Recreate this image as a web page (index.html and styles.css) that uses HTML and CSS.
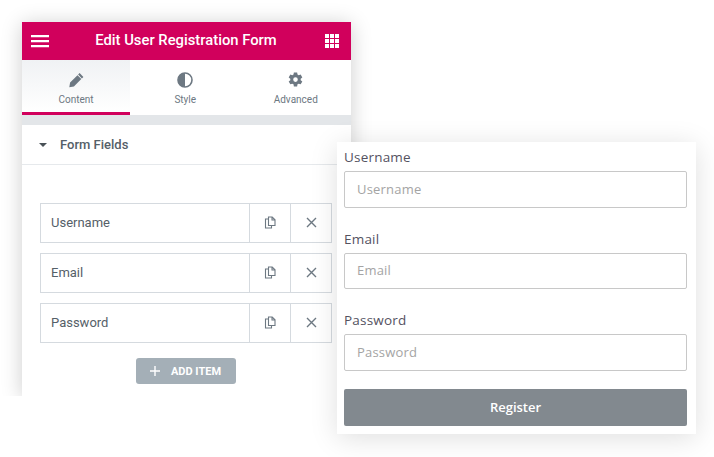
FILE: index.html
```html
<!DOCTYPE html>
<html lang="en">
<head>
  <meta charset="UTF-8">
  <title>Edit User Registration Form</title>
  <link rel="stylesheet" href="styles.css">
</head>
<body>
<div class="panel">
  <div class="panel-head">
    <svg class="head-icon" width="18" height="14" viewBox="0 0 18 14"><path d="M0 1h18v2.2H0zM0 6h18v2.2H0zM0 11h18v2.2H0z" fill="#fff"/></svg>
    <div class="panel-title">Edit User Registration Form</div>
    <svg class="head-icon" width="14" height="14" viewBox="0 0 14 14" fill="#fff"><path d="M0 0h4v4H0zM5 0h4v4H5zM10 0h4v4h-4zM0 5h4v4H0zM5 5h4v4H5zM10 5h4v4h-4zM0 10h4v4H0zM5 10h4v4H5zM10 10h4v4h-4z"/></svg>
  </div>

  <div class="tabs">
    <div class="tab active">
      <svg width="15" height="16" viewBox="0 0 15 15"><path d="M10.6.6l3.800 3.800-1.500 1.500-3.800-3.800zM8.500 2.700l3.800 3.800-7.400 7.400-4.600.8.800-4.600z" fill="#6d7882"/></svg>
      <span>Content</span>
    </div>
    <div class="tab">
      <svg width="16" height="16" viewBox="0 0 16 16"><circle cx="8" cy="8" r="7" fill="none" stroke="#6d7882" stroke-width="1.600"/><path d="M8 1a7 7 0 0 0 0 14z" fill="#6d7882"/></svg>
      <span>Style</span>
    </div>
    <div class="tab">
      <svg width="15" height="16" viewBox="0 0 24 24"><path fill="#6d7882" fill-rule="evenodd" d="M14.600 0l.6 3.300 1.900 1.100 3.200-1.100 2.600 4.500-2.600 2.200v2.200l2.600 2.200-2.600 4.500-3.200-1.100-1.900 1.100-.6 3.300H9.400l-.6-3.300-1.900-1.100-3.200 1.100L1.100 14.400l2.600-2.200V10L1.100 7.800l2.600-4.500 3.200 1.100 1.900-1.100L9.400 0zM12 7.600a3.700 3.700 0 1 0 0 7.400 3.700 3.700 0 0 0 0-7.400z"/></svg>
      <span>Advanced</span>
    </div>
  </div>

  <div class="section-head">
    <span class="caret"></span>
    <span>Form Fields</span>
  </div>

  <div class="rows">
    <div class="row">
      <div class="row-name">Username</div>
      <div class="row-btn"><svg class="copy-icon" width="12" height="13" viewBox="0 0 12 13"><path d="M4.500 1h3.700L11 3.800v5.700H4.500zM8 1v3h3M4.500 3H1.500v9h6V9.500" fill="none" stroke="#6d7882" stroke-width="1.100"/></svg></div>
      <div class="row-btn"><svg class="close-icon" width="11" height="11" viewBox="0 0 11 11"><path d="M1 1l9 9M10 1l-9 9" stroke="#6d7882" stroke-width="1.400"/></svg></div>
    </div>
    <div class="row">
      <div class="row-name">Email</div>
      <div class="row-btn"><svg class="copy-icon" width="12" height="13" viewBox="0 0 12 13"><path d="M4.500 1h3.700L11 3.800v5.700H4.500zM8 1v3h3M4.500 3H1.500v9h6V9.500" fill="none" stroke="#6d7882" stroke-width="1.100"/></svg></div>
      <div class="row-btn"><svg class="close-icon" width="11" height="11" viewBox="0 0 11 11"><path d="M1 1l9 9M10 1l-9 9" stroke="#6d7882" stroke-width="1.400"/></svg></div>
    </div>
    <div class="row">
      <div class="row-name">Password</div>
      <div class="row-btn"><svg class="copy-icon" width="12" height="13" viewBox="0 0 12 13"><path d="M4.500 1h3.700L11 3.800v5.700H4.500zM8 1v3h3M4.500 3H1.500v9h6V9.500" fill="none" stroke="#6d7882" stroke-width="1.100"/></svg></div>
      <div class="row-btn"><svg class="close-icon" width="11" height="11" viewBox="0 0 11 11"><path d="M1 1l9 9M10 1l-9 9" stroke="#6d7882" stroke-width="1.400"/></svg></div>
    </div>
  </div>

  <div class="add-wrap">
    <div class="add-btn">
      <svg width="10" height="10" viewBox="0 0 10 10"><path d="M5 0v10M0 5h10" stroke="#fff" stroke-width="1.400"/></svg>
      <span>ADD ITEM</span>
    </div>
  </div>
</div>

<form class="reg-form">
  <label class="reg-label">Username</label>
  <div class="reg-input">Username</div>
  <label class="reg-label">Email</label>
  <div class="reg-input">Email</div>
  <label class="reg-label">Password</label>
  <div class="reg-input">Password</div>
  <div class="reg-btn">Register</div>
</form>
</body>
</html>
```

FILE: styles.css
```css
body {
  margin: 0;
  background: #fff;
  font-family: Roboto, sans-serif;
  overflow: hidden;
}

.panel {
  width: 329px;
  height: 374px;
  margin: 22px 0 0 22px;
  background: #fff;
  box-shadow: 0 2px 20px rgba(0, 0, 0, 0.2);
}

.panel-head {
  height: 38px;
  background: #d1005c;
  display: flex;
  align-items: center;
  justify-content: space-between;
  padding: 0 12px 0 9px;
}

.panel-title {
  color: #fff;
  font-size: 14.800px;
  font-weight: 500;
  padding: 0 2px 2px 0;
}

.tabs {
  display: flex;
  height: 55px;
  border-bottom: 10px solid #e3e6e9;
}

.tab {
  flex: 1;
  display: flex;
  flex-direction: column;
  align-items: center;
  gap: 6px;
  padding-top: 12px;
  box-sizing: border-box;
  font-size: 10px;
  color: #6d7882;
}

.tab.active {
  background: linear-gradient(#f0f2f4, #fff);
  border-bottom: 3px solid #d1005c;
  flex: 0 0 108px;
}

.section-head {
  height: 40px;
  box-sizing: border-box;
  display: flex;
  align-items: center;
  gap: 13px;
  padding-left: 17px;
  border-bottom: 1px solid #e6e9ec;
  font-size: 13px;
  font-weight: 500;
  color: #556068;
}

.caret {
  width: 0;
  height: 0;
  border-left: 4px solid transparent;
  border-right: 4px solid transparent;
  border-top: 4px solid #495157;
}

.rows {
  display: flex;
  flex-direction: column;
  gap: 10px;
  margin: 38px 19px 0 18px;
}

.row {
  height: 40px;
  box-sizing: border-box;
  display: flex;
  border: 1px solid #d5dadf;
}

.row-name {
  flex: 1;
  display: flex;
  align-items: center;
  padding: 0 0 2px 10px;
  font-size: 13px;
  color: #556068;
}

.row-btn {
  width: 40px;
  display: flex;
  align-items: center;
  justify-content: center;
  border-left: 1px solid #d5dadf;
}

.copy-icon {
  margin-bottom: 2px;
}

.close-icon {
  margin-bottom: 1px;
}

.add-wrap {
  display: flex;
  justify-content: center;
  margin-top: 15px;
  padding-right: 2px;
}

.add-btn {
  width: 100px;
  height: 26px;
  background: #a4afb7;
  border-radius: 3px;
  display: flex;
  align-items: center;
  justify-content: center;
  gap: 11px;
  color: #fff;
  font-size: 11px;
  font-weight: 700;
}

/* フォーム側はパネルに重なる */
.reg-form {
  position: absolute;
  left: 337px;
  top: 142px;
  width: 358.500px;
  height: 292px;
  box-sizing: border-box;
  padding: 8px 8.500px 0 7px;
  background: #fff;
  box-shadow: 0 4px 26px rgba(0, 0, 0, 0.13);
  font-family: "Open Sans", sans-serif;
  display: flex;
  flex-direction: column;
}

.reg-label {
  font-size: 13.500px;
  line-height: 15px;
  color: #54525f;
  letter-spacing: 0.2px;
  margin-bottom: 6px;
}

.reg-input {
  height: 36.500px;
  box-sizing: border-box;
  border: 1px solid #c8c8c8;
  border-radius: 2px;
  padding: 0 0 1px 12px;
  display: flex;
  align-items: center;
  font-size: 13px;
  letter-spacing: 0.2px;
  color: #a4a4a4;
  margin-bottom: 24px;
}

.reg-input + .reg-label + .reg-input + .reg-label + .reg-input {
  margin-bottom: 18.500px;
}

.reg-btn {
  height: 37px;
  background: #82898f;
  border-radius: 2px;
  color: #fff;
  font-size: 13px;
  font-weight: 600;
  display: flex;
  align-items: center;
  justify-content: center;
  padding-bottom: 1px;
  box-sizing: border-box;
}
```
